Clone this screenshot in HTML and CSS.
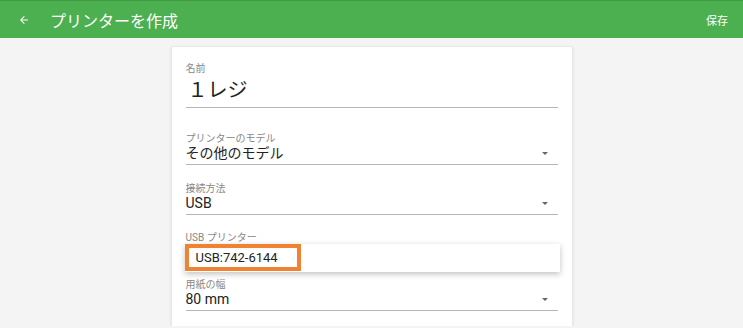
FILE: index.html
```html
<!DOCTYPE html>
<html lang="ja">
    <head>
        <meta charset="UTF-8">
        <meta name="viewport" content="width=device-width, initial-scale=1.0">
        <link rel="stylesheet" href="styles.css">
        <title>プリンターを作成</title>
    </head>
    <body>

        <header class="toolbar">
            <span class="back">
                <svg width="12" height="12" viewBox="0 0 24 24"><path d="M20 11H7.83l5.59-5.59L12 4l-8 8 8 8 1.41-1.41L7.83 13H20v-2z" fill="#fff"/></svg>
            </span>
            <h1 class="title">プリンターを作成</h1>
            <span class="save">保存</span>
        </header>

        <main class="card">
            <div class="field name">
                <label>名前</label>
                <div class="value">１レジ</div>
            </div>

            <div class="field select model">
                <label>プリンターのモデル</label>
                <div class="value">その他のモデル<span class="arrow"></span></div>
            </div>

            <div class="field select">
                <label>接続方法</label>
                <div class="value">USB<span class="arrow"></span></div>
            </div>

            <div class="field menu-field">
                <label>USB プリンター</label>
                <div class="menu">
                    <div class="menu-item">USB:742-6144</div>
                </div>
            </div>

            <div class="field select">
                <label>用紙の幅</label>
                <div class="value">80 mm<span class="arrow"></span></div>
            </div>
        </main>

    </body>
</html>
```

FILE: styles.css
```css
body {
    font-family: Roboto, "Noto Sans CJK JP", sans-serif;
    background: #f4f4f4;
    margin: 0;
    color: #222;
}

.toolbar {
    background: #4caf50;
    border-top: 1px solid #3f9a43;
    height: 37px;
    display: flex;
    align-items: center;
    color: #fff;
}

.back {
    display: flex;
    margin-left: 18px;
    width: 12px;
}

.title {
    font-size: 16px;
    font-weight: normal;
    margin: 0 0 0 20px;
    flex: 1;
}

.save {
    font-size: 11px;
    margin-right: 15px;
}

.card {
    background: #fff;
    width: 372px;
    margin: 9px auto 0;
    padding: 17px 14px 15px;
    box-shadow: 0 0 2px rgba(0, 0, 0, 0.12);
    border-left: 1px solid #e8e8e8;
    border-right: 1px solid #e8e8e8;
}

.field label {
    display: block;
    font-size: 10px;
    color: #888;
    line-height: 10px;
}

.field .value {
    position: relative;
    font-size: 14px;
    line-height: 18px;
    border-bottom: 1px solid #b5b5b5;
    padding-bottom: 2px;
}

.name .value {
    font-size: 20px;
    line-height: 26px;
    padding: 3px 0 4px 2px;
}

.select {
    margin-top: 19px;
}

.model {
    margin-top: 26px;
}

.arrow {
    position: absolute;
    right: 10px;
    top: 8px;
    border-left: 3px solid transparent;
    border-right: 3px solid transparent;
    border-top: 3px solid #666;
}

.menu-field {
    margin-top: 18px;
    position: relative;
    height: 47px;
}

.menu {
    position: absolute;
    top: 11px;
    left: -1px;
    right: -2px;
    background: #fff;
    height: 28px;
    box-shadow: 0 2px 6px rgba(0, 0, 0, 0.25);
}

.menu-item {
    display: inline-block;
    box-sizing: border-box;
    width: 116px;
    height: 27px;
    border: 4px solid #f08231;
    font-size: 13px;
    line-height: 19px;
    padding-left: 7px;
    color: #222;
}

.menu-field + .select {
    margin-top: 0;
}
```
